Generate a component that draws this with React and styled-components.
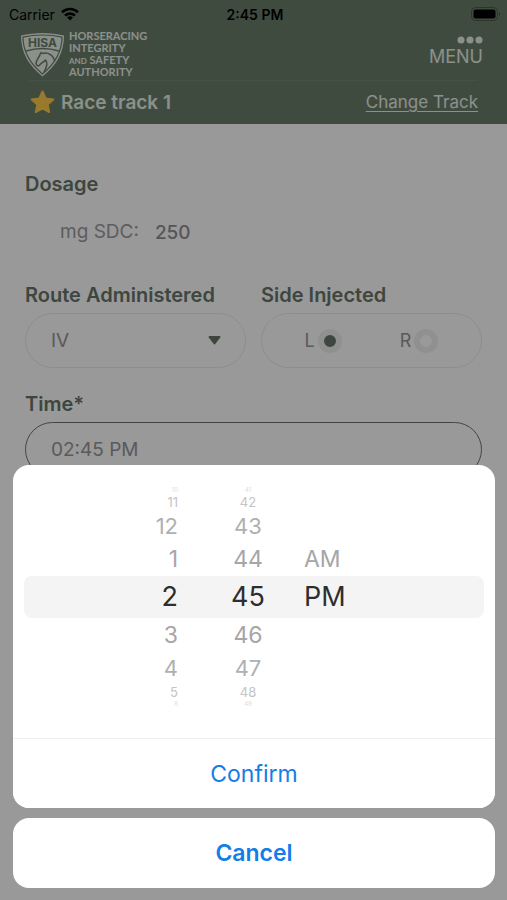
import styled, { createGlobalStyle } from 'styled-components'

const GlobalStyle = createGlobalStyle`
	* {
		box-sizing: border-box;
	}
	body {
		margin: 0;
		background: #fff;
		font-family: Inter, 'Liberation Sans', sans-serif;
	}
	button,
	input,
	select {
		font-family: inherit;
	}
`

const Screen = styled.div`
	min-height: 100vh;
`

const Header = styled.header`
	background: #6b7d6b;
	color: #e8f0e8;
	padding-bottom: 1px;
`

const StatusBar = styled.div`
	display: grid;
	grid-template-columns: 1fr auto 1fr;
	align-items: center;
	height: 28px;
	padding: 0 6px 0 9px;
	color: #000;
	font-size: 14px;
`

const Carrier = styled.span`
	display: flex;
	align-items: center;
	gap: 6px;
`

const Clock = styled.time`
	font-weight: 600;
`

const Battery = styled.svg`
	justify-self: end;
`

const BrandRow = styled.div`
	display: flex;
	justify-content: space-between;
	align-items: center;
	height: 52px;
	padding: 0 24px 0 20px;
`

const Brand = styled.div`
	display: flex;
	align-items: center;
	gap: 4px;
`

const BrandName = styled.p`
	margin: 0;
	font-family: Lato, sans-serif;
	font-size: 11px;
	line-height: 12px;
	font-weight: 700;

	span {
		display: block;
		height: 12px;
	}
	small {
		font-size: 8px;
		line-height: 8px;
	}
`

const MenuButton = styled.button`
	display: flex;
	flex-direction: column;
	align-items: flex-end;
	gap: 2px;
	padding: 0 0 4px;
	border: none;
	background: none;
	color: inherit;
	font-size: 18px;
	line-height: 22px;
	cursor: pointer;
`

const TrackBar = styled.div`
	display: flex;
	justify-content: space-between;
	align-items: center;
	height: 43px;
	margin: 0 29px;
	border-top: 1px solid #768876;
`

const Track = styled.h1`
	display: flex;
	align-items: center;
	gap: 6px;
	margin: 0;
	font-size: 19px;
	font-weight: 600;
`

const ChangeLink = styled.a`
	color: inherit;
	font-size: 17px;
	text-underline-offset: 3px;
`

const Form = styled.form`
	padding: 48px 25px;
`

const Label = styled.label`
	display: block;
	color: #68756a;
	font-size: 20px;
	line-height: 24px;
	font-weight: 600;
`

const Legend = styled(Label).attrs({ as: 'legend' })`
	padding: 0;
`

const Dose = styled.div`
	display: flex;
	gap: 16px;
	margin: 24px 0 39px;
	padding-left: 35px;
	color: #9c9c9c;
	font-size: 19px;
	line-height: 24px;
`

const DoseInput = styled.input`
	width: 80px;
	height: 24px;
	padding: 0;
	border: none;
	background: none;
	color: #8f8f8f;
	font-size: 19px;
	font-weight: 500;
`

const Columns = styled.div`
	display: grid;
	grid-template-columns: 1fr 1fr;
	gap: 15px;
	margin-bottom: 24px;
`

const Group = styled.fieldset`
	min-width: 0;
	margin: 0;
	padding: 0;
	border: none;
`

const Pill = styled.div`
	display: flex;
	align-items: center;
	justify-content: center;
	gap: 58px;
	height: 55px;
	margin-top: 6px;
	border: 1px solid #ebebe6;
	border-radius: 28px;
`

const SelectPill = styled(Pill)`
	justify-content: space-between;
	gap: 0;
	padding-right: 24px;
`

const Select = styled.select`
	flex: 1;
	height: 100%;
	padding: 0 0 0 25px;
	border: none;
	background: none;
	appearance: none;
	color: #969696;
	font-size: 19px;
`

const RadioLabel = styled.label`
	display: flex;
	align-items: center;
	gap: 3px;
	color: #969696;
	font-size: 18px;
`

const Radio = styled.input`
	appearance: none;
	width: 24px;
	height: 24px;
	margin: 0;
	border: 6px solid #f0f0f0;
	border-radius: 50%;
	background: #fff;

	&:checked {
		background: #68756a;
	}
`

const TimeInput = styled.input`
	display: block;
	width: 100%;
	height: 55px;
	margin-top: 6px;
	padding: 0 25px;
	border: 1px solid #6c776d;
	border-radius: 28px;
	background: none;
	color: #969696;
	font-size: 19px;
`

const Overlay = styled.div`
	position: fixed;
	inset: 0;
	display: flex;
	flex-direction: column;
	justify-content: flex-end;
	gap: 10px;
	padding: 12px 12px 12px 13px;
	background: rgba(0, 0, 0, 0.4);
`

const Sheet = styled.div`
	border-radius: 16px;
	background: #fff;
	overflow: hidden;
`

const Wheel = styled.div`
	position: relative;
	display: grid;
	grid-template-columns: 44px 126px 70px;
	justify-content: center;
	margin: 21px 11px 30px;
`

const WheelBand = styled.div`
	position: absolute;
	inset: 90px 0;
	border-radius: 8px;
	background: #f4f4f4;
`

const WheelColumn = styled.ul`
	position: relative;
	margin: 0;
	padding: 0 0 0 ${({ $indent }) => $indent || 0}px;
	list-style: none;
	text-align: ${({ $align }) => $align || 'left'};
`

// rows shrink and fade with their distance from the selected one
const steps = [
	{ height: 42, size: 27, color: '#2e2e2e' },
	{ height: 34, size: 23, color: '#a6a6a6' },
	{ height: 32, size: 22, color: '#b0b0b0' },
	{ height: 16, size: 13, color: '#c4c4c4' },
	{ height: 8, size: 6, color: '#dedede' },
]

const WheelItem = styled.li`
	height: ${({ $step }) => steps[$step].height}px;
	line-height: ${({ $step }) => steps[$step].height}px;
	font-size: ${({ $step }) => steps[$step].size}px;
	color: ${({ $step }) => steps[$step].color};
`

const SheetButton = styled.button`
	display: block;
	width: 100%;
	height: 70px;
	padding: 0;
	border: none;
	background: #fff;
	color: #137de8;
	font-size: 23px;
	cursor: pointer;
`

const ConfirmButton = styled(SheetButton)`
	border-top: 1px solid #efefef;
`

const CancelButton = styled(SheetButton)`
	border-radius: 16px;
	font-weight: 600;
`

const hours = ['10', '11', '12', '1', '2', '3', '4', '5', '6']
const minutes = ['41', '42', '43', '44', '45', '46', '47', '48', '49']
const meridiem = ['', '', '', 'AM', 'PM']

const PickerColumn = ({ label, items, align, indent }) => (
	<WheelColumn role='listbox' aria-label={label} $align={align} $indent={indent}>
		{items.map((item, i) => (
			<WheelItem
				key={i}
				role={item ? 'option' : 'presentation'}
				aria-selected={item ? i === 4 : undefined}
				$step={Math.abs(i - 4)}
			>
				{item}
			</WheelItem>
		))}
	</WheelColumn>
)

const WifiIcon = () => (
	<svg width='18' height='14' viewBox='0 0 18 14' fill='none' stroke='#000' strokeWidth='2.6'>
		<path d='M1 5.2a11.5 11.5 0 0 1 16 0' />
		<path d='M4 8.6a7.2 7.2 0 0 1 10 0' />
		<path d='M9 13.6L6 10.6a4.3 4.3 0 0 1 6 0z' fill='#000' stroke='none' />
	</svg>
)

const BatteryIcon = () => (
	<Battery width='30' height='15' viewBox='0 0 30 15'>
		<rect x='0.5' y='0.5' width='26' height='13' rx='4' fill='none' stroke='#4a574a' />
		<rect x='2.5' y='2.5' width='22' height='9' rx='2' fill='#000' />
		<path d='M28 5c1.6.6 1.6 3.4 0 4z' fill='#4a574a' />
	</Battery>
)

const ShieldLogo = () => (
	<svg width='45' height='45' viewBox='0 0 45 45' role='img' aria-label='HISA'>
		<path
			d='M22.5 1C29 1 37 2 44 3.5C44 20 37 33 22.5 44.5C8 33 1 20 1 3.5C8 2 16 1 22.5 1z'
			fill='#e8f0e8'
		/>
		<path
			d='M22.5 3C29 3 36 3.8 42 5.2C42 19 35 31.5 22.5 42C10 31.5 3 19 3 5.2C9 3.8 16 3 22.5 3z'
			fill='none'
			stroke='#6b7d6b'
			strokeWidth='1.2'
		/>
		<path d='M6 19C16 16 29 16 39 19' fill='none' stroke='#6b7d6b' strokeWidth='1.4' />
		<text x='22.5' y='15' textAnchor='middle' fontSize='12' fontWeight='700' fill='#6b7d6b'>
			HISA
		</text>
		<path
			d='M19 34L17 33.5L16 31.5C16 28 19 26 20 22.5L21 20.5L22.5 21.5C28 20 34 23.5 34.5 29.5'
			fill='none'
			stroke='#6b7d6b'
			strokeWidth='1.5'
			strokeLinejoin='round'
		/>
		<path
			d='M19 34C20 31.5 23 31 25.5 28C28 31 27 35 24 40'
			fill='none'
			stroke='#6b7d6b'
			strokeWidth='1.5'
			strokeLinejoin='round'
		/>
	</svg>
)

const App = () => {
	return (
		<>
			<GlobalStyle />
			<Screen>
				<Header>
					<StatusBar>
						<Carrier>
							Carrier
							<WifiIcon />
						</Carrier>
						<Clock>2:45 PM</Clock>
						<BatteryIcon />
					</StatusBar>
					<BrandRow>
						<Brand>
							<ShieldLogo />
							<BrandName>
								<span>HORSERACING</span>
								<span>INTEGRITY</span>
								<span>
									<small>AND</small> SAFETY
								</span>
								<span>AUTHORITY</span>
							</BrandName>
						</Brand>
						<MenuButton type='button'>
							<svg width='26' height='8' viewBox='0 0 26 8' fill='currentColor'>
								<circle cx='4' cy='4' r='3.5' />
								<circle cx='13' cy='4' r='3.5' />
								<circle cx='22' cy='4' r='3.5' />
							</svg>
							MENU
						</MenuButton>
					</BrandRow>
					<TrackBar>
						<Track>
							<svg width='26' height='26' viewBox='0 0 26 26'>
								<path
									d='M13.5 2.5l3.2 7 7.6.9-5.6 5.2 1.5 7.5-6.7-3.7-6.7 3.7 1.5-7.5-5.6-5.2 7.6-.9z'
									fill='#ffcb4a'
									stroke='#ffcb4a'
									strokeWidth='2'
									strokeLinejoin='round'
								/>
							</svg>
							Race track 1
						</Track>
						<ChangeLink href='#tracks'>Change Track</ChangeLink>
					</TrackBar>
				</Header>
				<Form>
					<Label htmlFor='dosage'>Dosage</Label>
					<Dose>
						<span>mg SDC:</span>
						<DoseInput id='dosage' defaultValue='250' />
					</Dose>
					<Columns>
						<div>
							<Label htmlFor='route'>Route Administered</Label>
							<SelectPill>
								<Select id='route' defaultValue='IV'>
									<option>IV</option>
								</Select>
								<svg width='13' height='9' viewBox='0 0 13 9'>
									<path
										d='M1.5 1h10L6.5 7.5z'
										fill='#68756a'
										stroke='#68756a'
										strokeWidth='2'
										strokeLinejoin='round'
									/>
								</svg>
							</SelectPill>
						</div>
						<Group>
							<Legend>Side Injected</Legend>
							<Pill>
								<RadioLabel>
									L
									<Radio type='radio' name='side' value='L' defaultChecked />
								</RadioLabel>
								<RadioLabel>
									R
									<Radio type='radio' name='side' value='R' />
								</RadioLabel>
							</Pill>
						</Group>
					</Columns>
					<Label htmlFor='time'>Time*</Label>
					<TimeInput id='time' defaultValue='02:45 PM' />
				</Form>
			</Screen>
			<Overlay>
				<Sheet role='dialog' aria-label='Time'>
					<Wheel>
						<WheelBand />
						<PickerColumn label='Hour' items={hours} align='right' />
						<PickerColumn label='Minute' items={minutes} align='center' indent={14} />
						<PickerColumn label='AM or PM' items={meridiem} />
					</Wheel>
					<ConfirmButton type='button'>Confirm</ConfirmButton>
				</Sheet>
				<CancelButton type='button'>Cancel</CancelButton>
			</Overlay>
		</>
	)
}

export default App
